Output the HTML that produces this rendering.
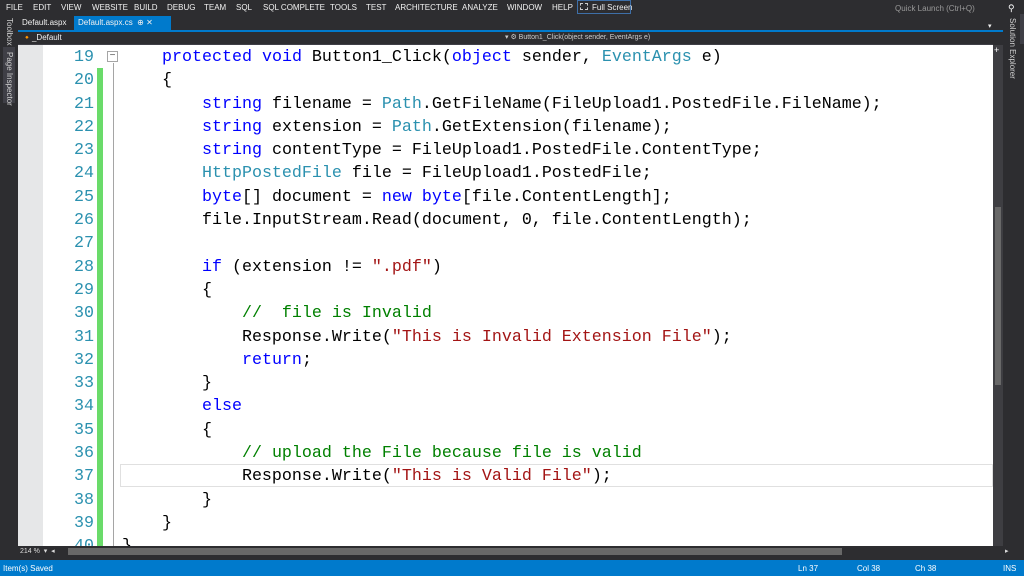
<!DOCTYPE html>
<html><head><meta charset="utf-8"><style>
*{margin:0;padding:0;box-sizing:border-box}
body{width:1024px;height:576px;overflow:hidden;background:#2d2d30;font-family:"Liberation Sans",sans-serif;position:relative;color:#f1f1f1}
.abs{position:absolute;white-space:nowrap}
.menu{top:0;left:0;height:14px;font-size:8px;color:#f1f1f1}
.menu span{position:absolute;top:3px}
.tab{font-size:8px;top:18px}
.code{left:18px;top:45px;width:975px;height:501px;background:#fff;overflow:hidden}
.ln{position:absolute;left:0;width:76px;text-align:right;color:#2b91af;font-family:"Liberation Mono",monospace;font-size:16.67px;line-height:23.3px}
.tx{position:absolute;left:104px;font-family:"Liberation Mono",monospace;font-size:16.67px;line-height:23.3px;color:#000;white-space:pre}
.k{color:#0000ff}.t{color:#2b91af}.s{color:#a31515}.c{color:#008000}
.vt{writing-mode:vertical-rl;font-size:8px;color:#d0d0d0}
</style></head><body>
<div class="abs menu" style="width:1024px">
<span style="left:6px">FILE</span><span style="left:33px">EDIT</span><span style="left:61px">VIEW</span><span style="left:92px">WEBSITE</span><span style="left:134px">BUILD</span><span style="left:167px">DEBUG</span><span style="left:204px">TEAM</span><span style="left:236px">SQL</span><span style="left:263px">SQL COMPLETE</span><span style="left:330px">TOOLS</span><span style="left:366px">TEST</span><span style="left:395px">ARCHITECTURE</span><span style="left:462px">ANALYZE</span><span style="left:507px">WINDOW</span><span style="left:552px">HELP</span>
</div>
<div class="abs" style="left:577px;top:0px;width:54px;height:14px;border:1px solid #3e6fa8;font-size:8px;padding:2px 0 0 14px">Full Screen</div>
<div class="abs" style="left:580px;top:3px;width:8px;height:7px;border:1px dashed #ccc"></div>
<div class="abs" style="left:895px;top:4px;font-size:8px;color:#999">Quick Launch (Ctrl+Q)</div>
<div class="abs" style="left:1008px;top:3px;font-size:9px;color:#fff">⚲</div>
<div class="abs" style="left:0;top:14px;width:18px;height:532px;background:#2d2d30"></div>
<div class="abs vt" style="left:5px;top:18px">Toolbox</div>
<div class="abs" style="left:3px;top:47px;width:12px;height:56px;background:#3f3f46"></div>
<div class="abs vt" style="left:5px;top:52px">Page Inspector</div>
<div class="abs tab" style="left:22px">Default.aspx</div>
<div class="abs" style="left:74px;top:16px;width:97px;height:15px;background:#007acc"></div>
<div class="abs tab" style="left:78px">Default.aspx.cs &nbsp;⊕ ✕</div>
<div class="abs" style="left:18px;top:30px;width:985px;height:2px;background:#007acc"></div>
<div class="abs" style="left:988px;top:22px;font-size:7px">▾</div>
<div class="abs" style="left:18px;top:32px;width:975px;height:13px;background:#2d2d30;border-bottom:1px solid #3f3f46"></div>
<div class="abs" style="left:22px;top:33px;font-size:8px">🔸_Default</div>
<div class="abs" style="left:505px;top:33px;font-size:7px;color:#ccc">▾ ⚙ Button1_Click(object sender, EventArgs e)</div>
<div class="abs" style="left:1003px;top:14px;width:21px;height:532px;background:#2d2d30"></div>
<div class="abs" style="left:1020px;top:14px;width:4px;height:30px;background:#3f3f46"></div>
<div class="abs vt" style="left:1008px;top:18px">Solution Explorer</div>
<div class="abs" style="left:993px;top:45px;width:10px;height:501px;background:#3e3e42"></div>
<div class="abs" style="left:995px;top:207px;width:6px;height:178px;background:#686868"></div>
<div class="abs" style="left:994px;top:46px;font-size:9px;color:#fff;line-height:8px">+</div>
<div class="abs code">
<div class="abs" style="left:0;top:0;width:25px;height:501px;background:#e6e7e8"></div>
<div class="abs" style="left:79px;top:23px;width:6px;height:478px;background:#6adb6a"></div>
<div class="abs" style="left:95px;top:18px;width:1px;height:483px;background:#a5a5a5"></div>
<div class="abs" style="left:89px;top:6px;width:11px;height:11px;border:1px solid #a5a5a5;background:#fff;font-size:10px;line-height:8px;text-align:center;color:#555">−</div>
<div class="abs" style="left:102px;top:419px;width:873px;height:23px;border:1px solid #e0e0e0"></div>
<div class="ln" style="top:1px">19<br>20<br>21<br>22<br>23<br>24<br>25<br>26<br>27<br>28<br>29<br>30<br>31<br>32<br>33<br>34<br>35<br>36<br>37<br>38<br>39<br>40</div>
<div class="tx" style="top:1px">    <span class="k">protected</span> <span class="k">void</span> Button1_Click(<span class="k">object</span> sender, <span class="t">EventArgs</span> e)
    {
        <span class="k">string</span> filename = <span class="t">Path</span>.GetFileName(FileUpload1.PostedFile.FileName);
        <span class="k">string</span> extension = <span class="t">Path</span>.GetExtension(filename);
        <span class="k">string</span> contentType = FileUpload1.PostedFile.ContentType;
        <span class="t">HttpPostedFile</span> file = FileUpload1.PostedFile;
        <span class="k">byte</span>[] document = <span class="k">new</span> <span class="k">byte</span>[file.ContentLength];
        file.InputStream.Read(document, 0, file.ContentLength);

        <span class="k">if</span> (extension != <span class="s">".pdf"</span>)
        {
            <span class="c">//  file is Invalid</span>
            Response.Write(<span class="s">"This is Invalid Extension File"</span>);
            <span class="k">return</span>;
        }
        <span class="k">else</span>
        {
            <span class="c">// upload the File because file is valid</span>
            Response.Write(<span class="s">"This is Valid File"</span>);
        }
    }
}</div>
</div>
<div class="abs" style="left:18px;top:546px;width:975px;height:11px;background:#2d2d30"></div>
<div class="abs" style="left:20px;top:547px;font-size:7px;color:#ddd">214 % &nbsp;▾ &nbsp;◂</div>
<div class="abs" style="left:68px;top:548px;width:774px;height:7px;background:#686868"></div>
<div class="abs" style="left:1005px;top:547px;font-size:7px;color:#ddd">▸</div>
<div class="abs" style="left:0;top:560px;width:1024px;height:16px;background:#007acc;font-size:8px;color:#fff">
<span class="abs" style="left:3px;top:4px">Item(s) Saved</span><span class="abs" style="left:798px;top:4px">Ln 37</span><span class="abs" style="left:857px;top:4px">Col 38</span><span class="abs" style="left:915px;top:4px">Ch 38</span><span class="abs" style="left:1003px;top:4px">INS</span>
</div>
</body></html>
